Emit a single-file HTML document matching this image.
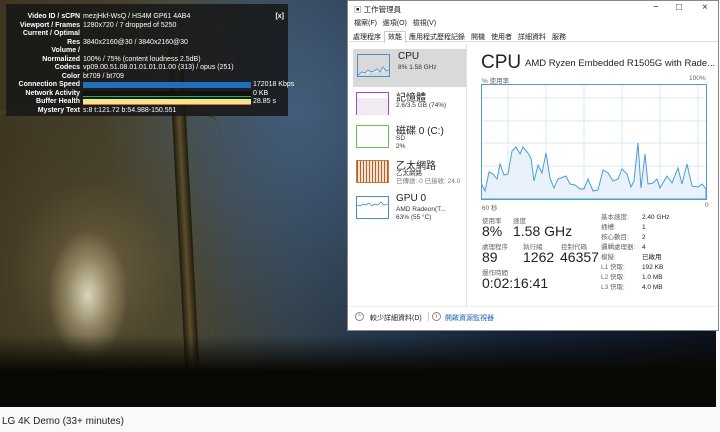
<!DOCTYPE html>
<html><head><meta charset="utf-8"><style>
*{margin:0;padding:0;box-sizing:border-box}
body{width:720px;height:432px;overflow:hidden;background:#f9f9f9;font-family:"Liberation Sans","Noto Sans CJK TC",sans-serif;position:relative}
#video{position:absolute;left:0;top:0;width:716px;height:407px;overflow:hidden;
background:
radial-gradient(ellipse 40px 65px at 88px 295px,rgba(225,220,195,.95),rgba(180,170,130,.55) 55%,rgba(0,0,0,0) 100%),
radial-gradient(ellipse 140px 150px at 95px 270px,rgba(120,105,70,.75),rgba(80,70,45,.35) 60%,rgba(0,0,0,0) 100%),
radial-gradient(ellipse 200px 230px at 300px 110px,rgba(70,100,135,.8),rgba(0,0,0,0) 100%),
linear-gradient(90deg,#3e3620 0%,#4a4630 25%,#33404a 40%,#223448 55%,#152236 72%,#0b121d 100%);}
.rod{position:absolute;background:linear-gradient(90deg,#1e1a0c,#5a4e2e,#1e1a0c);}
#stats{position:absolute;left:6px;top:4px;width:282px;height:112px;background:rgba(22,22,22,.85);color:#fff;font-size:7px;line-height:8.4px;font-weight:bold}
#stats .r{position:absolute;left:0;width:74px;text-align:right}
#stats .v{position:absolute;left:77px;font-weight:normal;white-space:nowrap}
.bar{position:absolute;left:77px;width:168px;height:6px}
#tm{position:absolute;left:347px;top:0;width:372px;height:331px;background:#fff;border:1px solid #888;font-size:7px;color:#222;overflow:hidden}
.tabs span{display:inline-block;padding:0 3px;font-size:7px}
.side{position:absolute;left:0;width:118px;height:38px}
.thumb{position:absolute;left:8px;top:5px;width:33px;height:23px;border:1px solid}
.sn{position:absolute;left:48px;top:2px;font-size:10px}
.ss{position:absolute;left:48px;font-size:6.5px;color:#333;line-height:8px}
.lbl{position:absolute;font-size:6.5px;color:#666}
.big{position:absolute;font-size:14px;color:#222}
</style></head><body>
<div id="video">
<div class="rod" style="left:178px;top:40px;width:14px;height:380px;transform:rotate(-3deg)"></div>
<div style="position:absolute;left:-20px;top:100px;width:240px;height:50px;border-radius:50%;border-top:5px solid #4a3f22;opacity:.8"></div>
<div style="position:absolute;left:0;top:335px;width:716px;height:72px;background:linear-gradient(180deg,rgba(10,8,4,0),#0a0804 50%)"></div>
<div id="stats">
<div class="r" style="top:9px">Video ID / sCPN</div><div class="v" style="top:9px">mezjHkf-WsQ / HS4M GP61 4AB4</div>
<div class="r" style="top:17.5px">Viewport / Frames</div><div class="v" style="top:17.5px">1280x720 / 7 dropped of 5250</div>
<div class="r" style="top:26px">Current / Optimal</div>
<div class="r" style="top:34.5px">Res</div><div class="v" style="top:34.5px">3840x2160@30 / 3840x2160@30</div>
<div class="r" style="top:43px">Volume /</div>
<div class="r" style="top:51.5px">Normalized</div><div class="v" style="top:51.5px">100% / 75% (content loudness 2.5dB)</div>
<div class="r" style="top:60px">Codecs</div><div class="v" style="top:60px">vp09.00.51.08.01.01.01.01.00 (313) / opus (251)</div>
<div class="r" style="top:68.5px">Color</div><div class="v" style="top:68.5px">bt709 / bt709</div>
<div class="r" style="top:77px">Connection Speed</div><div class="bar" style="top:78px;background:#1f6fc0"></div><div class="v" style="top:77px;left:247px">172018 Kbps</div>
<div class="r" style="top:85.5px">Network Activity</div><div class="bar" style="top:87px;background:#111;border-bottom:1px solid #2a6"></div><div class="v" style="top:85.5px;left:247px">0 KB</div>
<div class="r" style="top:94px">Buffer Health</div><div class="bar" style="top:95px;background:#eee88a;border-bottom:1px solid #d64"></div><div class="v" style="top:94px;left:247px">28.85 s</div>
<div class="r" style="top:102.5px">Mystery Text</div><div class="v" style="top:102.5px">s:8 t:121.72 b:54.988-150.551</div>
<div style="position:absolute;right:4px;top:9px">[x]</div>
</div>
</div>
<div style="position:absolute;left:2px;top:416px;font-size:10px;color:#222">LG 4K Demo (33+ minutes)</div>

<div id="tm">
<div style="position:absolute;left:6px;top:3px;font-size:7.5px">▣ 工作管理員</div>
<div style="position:absolute;left:305px;top:1px;font-size:10px;color:#333">−</div>
<div style="position:absolute;left:328px;top:1px;font-size:10px;color:#333">□</div>
<div style="position:absolute;left:354px;top:1px;font-size:10px;color:#333">×</div>
<div style="position:absolute;left:6px;top:17px;font-size:7px">檔案(F) &nbsp; 選項(O) &nbsp; 檢視(V)</div>
<div class="tabs" style="position:absolute;left:2px;top:30px;width:368px;height:11px;border-bottom:1px solid #ddd;line-height:11px"><span>處理程序</span><span style="border:1px solid #ccc;border-bottom:none;background:#fff">效能</span><span>應用程式歷程記錄</span><span>開機</span><span>使用者</span><span>詳細資料</span><span>服務</span></div>
<div style="position:absolute;left:118px;top:43px;width:1px;height:262px;background:#e4e4e4"></div>
<div class="side" style="top:48px;background:#d9d9d9;left:5px;width:113px">
 <div class="thumb" style="border-color:#4a90c8;left:4px;top:5px"><svg width="31" height="21"><polyline points="0,20 4,17 7,18 10,15 13,17 16,16 19,14 22,17 25,12 28,16 31,15" fill="#e5f0f9" stroke="#4a90c8" stroke-width=".8"/></svg></div>
 <div class="sn" style="left:45px">CPU</div><div class="ss" style="left:45px;top:15px">8% 1.58 GHz</div></div>
<div class="side" style="top:86px"><div class="thumb" style="border-color:#b044c8"><div style="margin-top:5px;height:17px;background:#f1eaf3"></div></div><div class="sn">記憶體</div><div class="ss" style="top:15px">2.6/3.5 GB (74%)</div></div>
<div class="side" style="top:119px"><div class="thumb" style="border-color:#6cc24a"></div><div class="sn">磁碟 0 (C:)</div><div class="ss" style="top:15px">SD<br>2%</div></div>
<div class="side" style="top:154px"><div class="thumb" style="border-color:#c87a3a;background:repeating-linear-gradient(90deg,#b5642a 0 1px,#f3e2d4 1px 3px)"></div><div class="sn">乙太網路</div><div class="ss" style="top:15px">乙太網路<br><span style="color:#777">已傳送: 0 已接收: 24.0</span></div></div>
<div class="side" style="top:190px"><div class="thumb" style="border-color:#4a90c8"><svg width="31" height="21"><polyline points="0,8 3,9 6,7 9,8 12,6 15,9 18,7 21,8 24,5 27,8 31,7" fill="none" stroke="#4a90c8" stroke-width=".8"/></svg></div><div class="sn">GPU 0</div><div class="ss" style="top:15px">AMD Radeon(T...<br>63% (55 °C)</div></div>

<div style="position:absolute;left:133px;top:51px;font-size:19px;color:#222">CPU</div>
<div style="position:absolute;left:177px;top:57px;font-size:9.5px;color:#222">AMD Ryzen Embedded R1505G with Rade...</div>
<div class="lbl" style="left:134px;top:74px">% 使用率</div>
<div class="lbl" style="left:341px;top:74px">100%</div>
<svg style="position:absolute;left:133px;top:83px" width="226" height="116">
<g stroke="#d9eaf7" stroke-width="1">
<line x1="27" y1="0" x2="27" y2="116"/><line x1="65" y1="0" x2="65" y2="116"/><line x1="103" y1="0" x2="103" y2="116"/><line x1="141" y1="0" x2="141" y2="116"/><line x1="179" y1="0" x2="179" y2="116"/><line x1="217" y1="0" x2="217" y2="116"/>
<line x1="0" y1="14" x2="226" y2="14"/><line x1="0" y1="37" x2="226" y2="37"/><line x1="0" y1="59" x2="226" y2="59"/><line x1="0" y1="82" x2="226" y2="82"/><line x1="0" y1="104" x2="226" y2="104"/></g>
<polygon fill="#e9f2fa" stroke="#4a9ed0" stroke-width="1" points="0,99 4,107 8,88 12,90 16,95 19,80 23,91 27,90 31,67 35,63 39,70 42,63 47,69 50,74 53,97 57,81 61,89 65,69 69,94 73,104 77,95 85,92 89,100 94,101 99,105 103,105 107,95 112,107 117,106 122,86 127,89 132,97 137,95 141,85 146,90 150,103 153,97 157,59 160,104 164,70 167,100 172,99 176,95 179,104 186,92 191,99 197,84 201,100 206,80 211,102 217,103 221,100 225,105 225,115 0,115"/>
<rect x="0.5" y="0.5" width="225" height="115" fill="none" stroke="#4a9ed0"/>
</svg>
<div class="lbl" style="left:134px;top:201px">60 秒</div><div class="lbl" style="left:357px;top:201px">0</div>
<div class="lbl" style="left:134px;top:214px">使用率</div><div class="lbl" style="left:165px;top:214px">速度</div>
<div class="big" style="left:134px;top:222px">8%</div><div class="big" style="left:165px;top:222px">1.58 GHz</div>
<div class="lbl" style="left:134px;top:240px">處理程序</div><div class="lbl" style="left:175px;top:240px">執行緒</div><div class="lbl" style="left:213px;top:240px">控制代碼</div>
<div class="big" style="left:134px;top:248px">89</div><div class="big" style="left:175px;top:248px">1262</div><div class="big" style="left:212px;top:248px">46357</div>
<div class="lbl" style="left:134px;top:266px">運作時間</div>
<div class="big" style="left:134px;top:274px">0:02:16:41</div>
<div style="position:absolute;left:253px;top:212px;font-size:6.5px;line-height:10px;color:#666">基本速度:<br>插槽:<br>核心數目:<br>邏輯處理器:<br>模擬:<br>L1 快取:<br>L2 快取:<br>L3 快取:</div>
<div style="position:absolute;left:294px;top:212px;font-size:6.5px;line-height:10px;color:#222">2.40 GHz<br>1<br>2<br>4<br>已啟用<br>192 KB<br>1.0 MB<br>4.0 MB</div>
<div style="position:absolute;left:0;top:305px;width:370px;height:1px;background:#eee"></div>
<div style="position:absolute;left:7px;top:311px;width:9px;height:9px;border:1px solid #888;border-radius:50%;font-size:6px;text-align:center;line-height:8px;color:#666">^</div>
<div style="position:absolute;left:22px;top:312px;font-size:7px">較少詳細資料(D)</div>
<div style="position:absolute;left:80px;top:311px;width:1px;height:9px;background:#ccc"></div>
<div style="position:absolute;left:84px;top:311px;width:9px;height:9px;border:1px solid #888;border-radius:50%;background:#fff;color:#c22;font-size:6px;text-align:center;line-height:8px">\</div>
<div style="position:absolute;left:97px;top:312px;font-size:7px;color:#1a5fb4">開啟資源監視器</div>
</div>
</body></html>
